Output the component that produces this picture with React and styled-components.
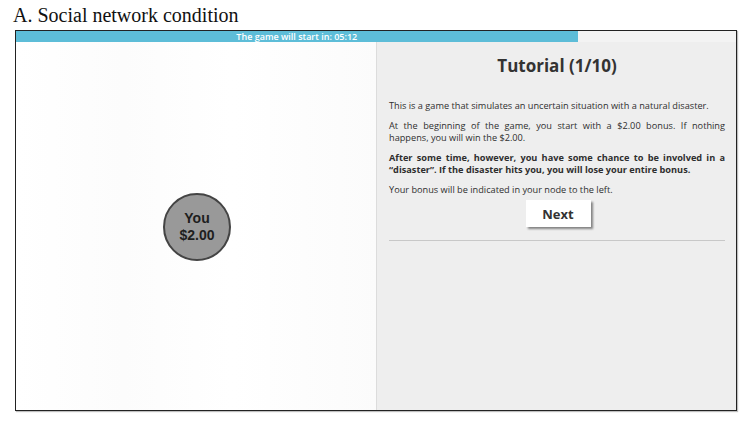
import React from "react";
import styled, { createGlobalStyle } from "styled-components";

const Global = createGlobalStyle`
  html, body { margin: 0; padding: 0; background: #fff; }
  body { width: 753px; height: 423px; overflow: hidden; }
`;

const Page = styled.div`
  padding: 3px 0 0 15px;
  display: flex;
  flex-direction: column;
`;

const Caption = styled.div`
  font-family: "Liberation Serif", "Times New Roman", serif;
  font-size: 20px;
  line-height: 24px;
  color: #111;
  margin-left: -2px;
  height: 27px;
`;

const Frame = styled.div`
  width: 720px;
  height: 379px;
  border: 1.5px solid #222;
  box-shadow: 1px 1px 1px rgba(0,0,0,0.25);
  display: flex;
  flex-direction: column;
  font-family: "Open Sans", sans-serif;
  box-sizing: content-box;
`;

const Progress = styled.div`
  height: 11px;
  background: #f3f3f3;
  display: flex;
`;

const Fill = styled.div`
  background: #5dbdd8;
  height: 100%;
  display: flex;
  align-items: center;
  justify-content: center;
  color: #fff;
  font-size: 9px;
  font-weight: 600;
  line-height: 11px;
`;

const Body = styled.div`
  flex: 1;
  display: flex;
`;

const Canvas = styled.div`
  width: 360px;
  position: relative;
  background: linear-gradient(90deg, #fff 0%, #fcfcfc 30%, #fff 60%, #fbfbfb 100%);
`;

const Node = styled.div`
  position: absolute;
  left: ${p => p.$x}px;
  top: ${p => p.$y}px;
  width: 64px;
  height: 64px;
  border-radius: 50%;
  background: #999;
  border: 2px solid #444;
  display: flex;
  flex-direction: column;
  align-items: center;
  justify-content: center;
  font-family: "Liberation Sans", Arial, sans-serif;
  font-weight: bold;
  font-size: 14px;
  line-height: 17px;
  color: #1e1e1e;
`;

const Panel = styled.div`
  flex: 1;
  background: #eeeeee;
  border-left: 1px solid #dcdcdc;
  padding: 0 11px 0 12px;
  display: flex;
  flex-direction: column;
`;

const Heading = styled.h1`
  margin: 12px 0 22px;
  font-size: 17px;
  line-height: 24px;
  font-weight: 700;
  color: #333;
  text-align: center;
`;

const Para = styled.p`
  margin: 0 0 8px;
  font-size: 9.2px;
  line-height: 12px;
  color: #2e2e2e;
  text-align: justify;
  font-weight: ${p => (p.$bold ? 700 : 400)};
  &:last-of-type { margin-bottom: 4px; }
`;

const ButtonRow = styled.div`
  display: flex;
  justify-content: center;
`;

const NextButton = styled.button`
  width: 65px;
  height: 27px;
  background: #fff;
  border: none;
  box-shadow: 2px 2px 2px rgba(0,0,0,0.45);
  font-family: "Open Sans", sans-serif;
  font-weight: 700;
  font-size: 13px;
  color: #333;
  margin-left: 2px;
`;

const Rule = styled.hr`
  border: none;
  border-top: 1px solid #c8c8c8;
  margin: 13px 0 0;
`;

export default function App() {
  return (
    <>
      <Global />
      <Page>
        <Caption>A. Social network condition</Caption>
        <Frame>
          <Progress>
            <Fill style={{ width: "78%" }}>The game will start in: 05:12</Fill>
          </Progress>
          <Body>
            <Canvas>
              <Node $x={147} $y={151}>
                <span>You</span>
                <span>$2.00</span>
              </Node>
            </Canvas>
            <Panel>
              <Heading>Tutorial (1/10)</Heading>
              <Para>This is a game that simulates an uncertain situation with a natural disaster.</Para>
              <Para>At the beginning of the game, you start with a $2.00 bonus. If nothing happens, you will win the $2.00.</Para>
              <Para $bold>After some time, however, you have some chance to be involved in a “disaster”. If the disaster hits you, you will lose your entire bonus.</Para>
              <Para>Your bonus will be indicated in your node to the left.</Para>
              <ButtonRow>
                <NextButton>Next</NextButton>
              </ButtonRow>
              <Rule />
            </Panel>
          </Body>
        </Frame>
      </Page>
    </>
  );
}
